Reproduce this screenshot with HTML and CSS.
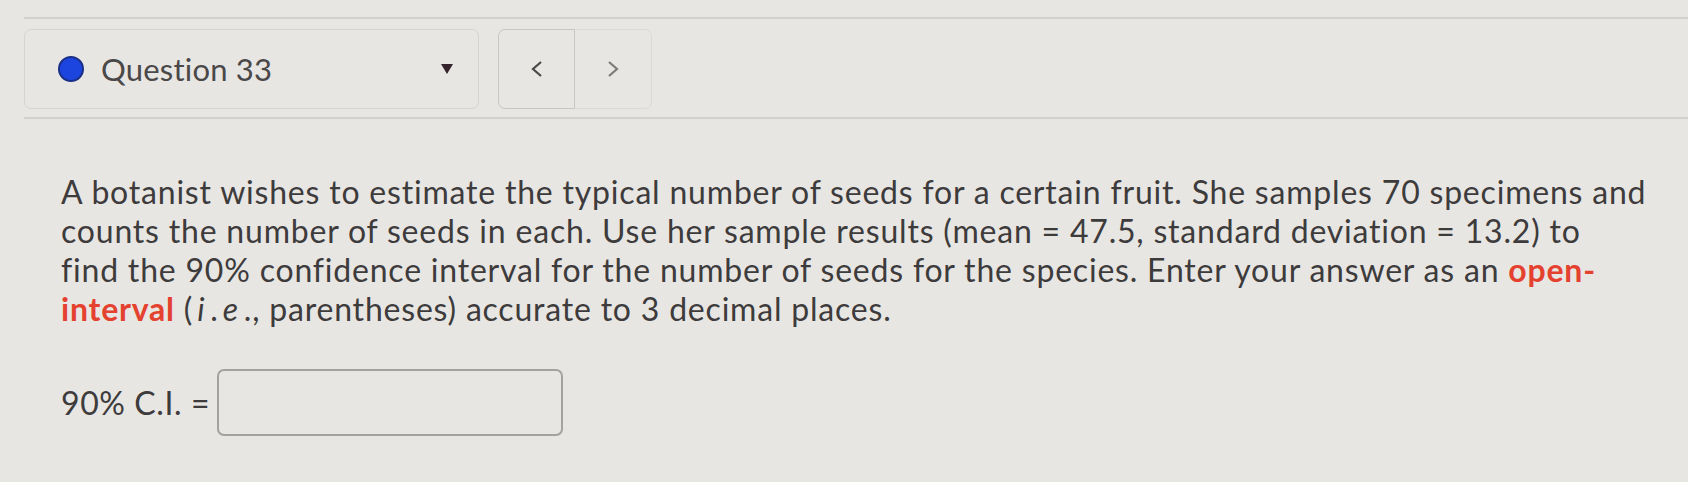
FILE: index.html
```html
<!DOCTYPE html>
<html lang="en">
<head>
<meta charset="utf-8">
<title>Question 33</title>
<link rel="stylesheet" href="styles.css">
</head>
<body>
<div class="page">
  <div class="rule"></div>
  <div class="nav">
    <div class="dropdown">
      <span class="dot"></span>
      <span class="qlabel">Question 33</span>
      <span class="caret"></span>
    </div>
    <div class="pager">
      <div class="seg seg-prev">
        <svg width="14" height="16" viewBox="0 0 14 16"><path d="M11 1 L3 8 L11 15" fill="none" stroke="#4a4848" stroke-width="2.2"/></svg>
      </div>
      <div class="seg seg-next">
        <svg width="14" height="16" viewBox="0 0 14 16"><path d="M3 1 L11 8 L3 15" fill="none" stroke="#7d7b7a" stroke-width="2.2"/></svg>
      </div>
    </div>
  </div>
  <div class="rule rule-bottom"></div>
  <div class="question">
    <p class="text">A botanist wishes to estimate the typical number of seeds for a certain fruit. She samples 70 specimens and<br>counts the number of seeds in each. Use her sample results (mean = 47.5, standard deviation = 13.2) to<br>find the 90% confidence interval for the number of seeds for the species. Enter your answer as an <strong class="hl">open-<br>interval</strong> (<i class="m">i</i>.<i class="m">e</i>., parentheses) accurate to 3 decimal places.</p>
    <div class="answer">
      <span class="alabel">90% C.I. =</span>
      <span class="input"></span>
    </div>
  </div>
</div>
</body>
</html>
```
FILE: styles.css
```css
html, body {
  margin: 0;
  padding: 0;
  background: #e8e6e3;
}
body {
  width: 1688px;
  height: 482px;
  overflow: hidden;
  font-family: Lato, "Open Sans", sans-serif;
  color: #3d3b3b;
}
.page {
  padding-left: 24px;
  padding-top: 17px;
}
.rule {
  height: 0;
  border-top: 2px solid #d2d0cd;
}
.rule-bottom {
  margin-top: 8px;
}
.nav {
  display: flex;
  gap: 19px;
  margin-top: 10px;
}
.dropdown {
  box-sizing: border-box;
  width: 455px;
  height: 80px;
  border: 1.5px solid #d6d4d1;
  border-radius: 7px;
  display: flex;
  align-items: center;
  padding-left: 33px;
  padding-right: 25px;
}
.dot {
  box-sizing: border-box;
  width: 26px;
  height: 26px;
  border-radius: 50%;
  background: #1c45e0;
  border: 2px solid #1a2f86;
}
.qlabel {
  margin-left: 17px;
  font-size: 31px;
  color: #4a4848;
  letter-spacing: 0.2px;
}
.caret {
  margin-left: auto;
  width: 0;
  height: 0;
  border-left: 6px solid transparent;
  border-right: 6px solid transparent;
  border-top: 10px solid #35232c;
}
.pager {
  display: flex;
  height: 80px;
}
.seg {
  box-sizing: border-box;
  width: 77px;
  height: 80px;
  display: flex;
  align-items: center;
  justify-content: center;
}
.seg-prev {
  border: 1.5px solid #c8c6c3;
  border-radius: 7px 0 0 7px;
}
.seg-next {
  border: 1.5px solid #dcdad7;
  border-left: none;
  border-radius: 0 7px 7px 0;
}
.question {
  padding-left: 37px;
  padding-top: 53px;
}
.text {
  margin: 0;
  font-size: 32px;
  line-height: 39px;
  letter-spacing: 0.8px;
}
.hl {
  color: #e4412f;
  font-weight: 700;
}
.m {
  font-style: italic;
  margin: 0 5px 0 4px;
}
.answer {
  display: flex;
  align-items: center;
  margin-top: 41px;
}
.alabel {
  font-size: 32px;
  letter-spacing: 0.6px;
  width: 156px;
}
.input {
  box-sizing: border-box;
  width: 346px;
  height: 67px;
  border: 2px solid #a4a2a0;
  border-radius: 7px;
}
```
